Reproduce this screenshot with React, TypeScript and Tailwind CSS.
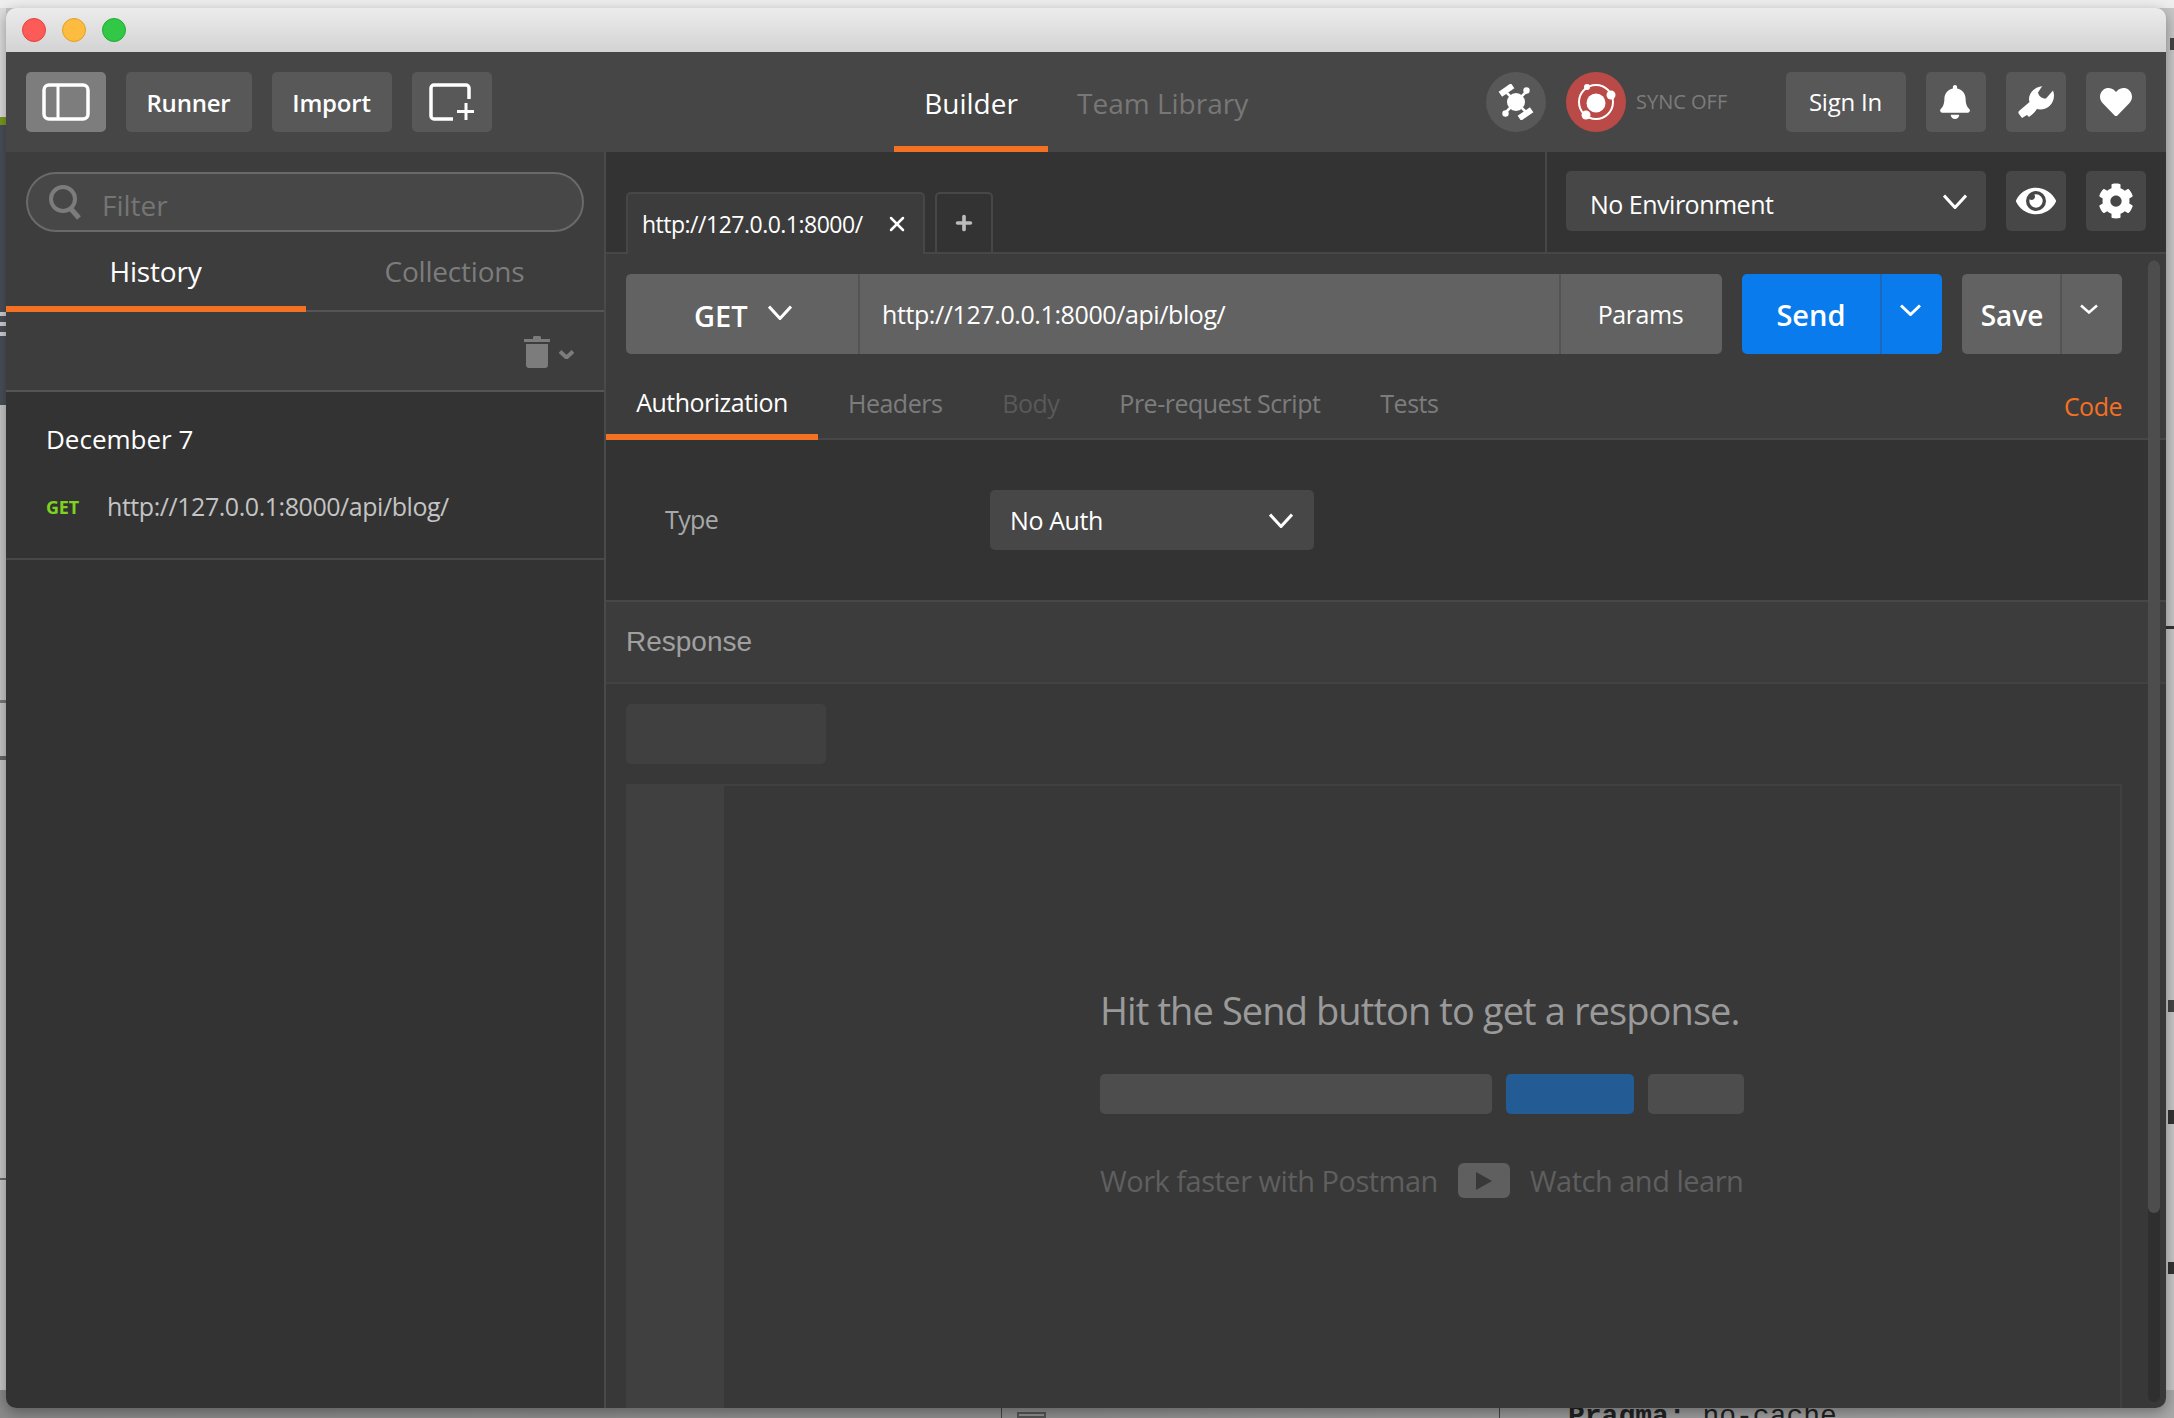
import { Plus, X } from "lucide-react";
import { FaBell, FaCog, FaEye, FaHeart } from "react-icons/fa";

function ToolbarButton({ children, className }: { children: React.ReactNode; className: string }) {
  return (
    <div className={"h-[60px] rounded-[5px] flex items-center justify-center text-white " + className}>
      {children}
    </div>
  );
}

function Chevron({ w, h, sw = 3, className }: { w: number; h: number; sw?: number; className?: string }) {
  return (
    <svg width={w} height={h} viewBox={`0 0 ${w} ${h}`} fill="none" stroke="currentColor" strokeWidth={sw} className={className}>
      <path d={`M1 1.5L${w / 2} ${h - 1.5}L${w - 1} 1.5`} />
    </svg>
  );
}

function SatelliteIcon() {
  return (
    <svg width="36" height="36" viewBox="0 0 36 36" fill="white">
      <circle cx="18" cy="18" r="9" />
      <g stroke="white" strokeWidth="2.5">
        <line x1="18" y1="18" x2="8" y2="8" />
        <line x1="18" y1="18" x2="28" y2="28" />
        <line x1="18" y1="18" x2="28" y2="8" />
        <line x1="18" y1="18" x2="8" y2="28" />
      </g>
      <circle cx="28.5" cy="6.5" r="3.2" />
      <circle cx="7.5" cy="29.5" r="3.2" />
      <rect x="1" y="3" width="15" height="6" transform="rotate(-35 8.5 6)" />
      <rect x="20" y="27" width="15" height="6" transform="rotate(-35 27.5 30)" />
    </svg>
  );
}

function SyncIcon() {
  return (
    <svg width="44" height="44" viewBox="0 0 44 44" fill="white">
      <circle cx="22" cy="23" r="9.5" />
      <circle cx="22" cy="22" r="17" fill="none" stroke="white" strokeWidth="2" />
      <circle cx="37" cy="15" r="4.5" />
      <circle cx="12" cy="35" r="4.5" />
      <circle cx="13" cy="7" r="3" />
    </svg>
  );
}

function WrenchIcon() {
  return (
    <svg width="36" height="32" viewBox="0 0 36 32" fill="white">
      <path d="M25 0C16 1 11 7 11 13c0 1 .2 2 .5 3L1 25c-.8 1-.8 2 0 3l3 4 5-3 2 2c3-2 6-5 8-8 1 .2 2 .4 3 .4 8 0 14-6 14-14 0-1.500-.3-3-1-5l-7 8c-4 0-7-2-8-6l6-9z" />
    </svg>
  );
}

function TrashIcon() {
  return (
    <svg width="26" height="32" viewBox="0 0 26 32" fill="currentColor">
      <path d="M0 3h9V1.5C9 .7 9.7 0 10.5 0h5c.8 0 1.5.7 1.5 1.5V3h9v3H0z" />
      <path d="M2 8h22v21c0 1.7-1.3 3-3 3H5c-1.700 0-3-1.300-3-3z" />
    </svg>
  );
}

export default function App() {
  return (
    <div className="relative w-[2174px] h-[1418px] overflow-hidden bg-[#c6c6c6] font-['Open_Sans',sans-serif]">
      {/* what shows behind the window */}
      <div className="absolute left-0 top-0 w-full h-[8px] bg-[#eeeeee]" />
      <div className="absolute left-0 top-[8px] w-[6px] h-[109px] bg-[#dddddd]" />
      <div className="absolute left-0 top-[117px] w-[6px] h-[8px] bg-[#7a9a20]" />
      <div className="absolute left-0 top-[125px] w-[6px] h-[280px] bg-[#4a4f58]" />
      <div className="absolute left-0 top-[312px] w-[6px] h-[4px] bg-[#d0d0d0]" />
      <div className="absolute left-0 top-[322px] w-[6px] h-[4px] bg-[#d0d0d0]" />
      <div className="absolute left-0 top-[332px] w-[6px] h-[4px] bg-[#d0d0d0]" />
      <div className="absolute left-0 top-[700px] w-[6px] h-[3px] bg-[#777777]" />
      <div className="absolute left-0 top-[756px] w-[6px] h-[4px] bg-[#666666]" />
      <div className="absolute left-0 top-[1178px] w-[6px] h-[2px] bg-[#666666]" />
      <div className="absolute right-0 top-[38px] w-[8px] h-[12px] border-r-4 border-[#444444]" />
      <div className="absolute right-0 top-[626px] w-[8px] h-[3px] bg-[#333333]" />
      <div className="absolute right-0 top-[1000px] w-[6px] h-[12px] bg-[#444444]" />
      <div className="absolute right-0 top-[1110px] w-[6px] h-[14px] bg-[#333333]" />
      <div className="absolute right-0 top-[1262px] w-[6px] h-[12px] bg-[#333333]" />
      <div className="absolute left-0 bottom-0 w-full h-[28px] bg-gradient-to-r from-[#8a8a8a] via-[#909090] to-[#a8a8a8]" />
      <div className="absolute left-[1001px] bottom-0 w-[1px] h-[14px] bg-[#444444]" />
      <div className="absolute left-[1017px] bottom-0 w-[29px] h-[6px] border-2 border-[#555555]" />
      <div className="absolute left-[1499px] bottom-0 w-[1px] h-[14px] bg-[#444444]" />
      <div className="absolute left-[1568px] top-[1401px] font-['Liberation_Mono',monospace] font-bold text-[28px] leading-[32px] text-[#222222] whitespace-pre">
        Pragma: <span className="font-normal">no-cache</span>
      </div>

      <div className="absolute left-[6px] top-[8px] w-[2160px] h-[1400px] rounded-[10px] overflow-hidden flex flex-col shadow-[0_4px_14px_rgba(0,0,0,0.35)]">
        {/* title bar */}
        <div className="h-[44px] shrink-0 bg-gradient-to-b from-[#ececec] to-[#d3d3d3] flex items-center pl-[16px] gap-[16px]">
          <div className="w-[24px] h-[24px] rounded-full bg-[#fc5b57] border border-[#e0443e]" />
          <div className="w-[24px] h-[24px] rounded-full bg-[#fdbc40] border border-[#dea123]" />
          <div className="w-[24px] h-[24px] rounded-full bg-[#33c748] border border-[#1dad2b]" />
        </div>

        {/* toolbar */}
        <div className="h-[100px] shrink-0 bg-[#464646] flex items-center px-[20px]">
          <ToolbarButton className="w-[80px] bg-[#7d7d7d]">
            <svg width="48" height="38" viewBox="0 0 48 38" fill="none" stroke="white" strokeWidth="3.5">
              <rect x="2" y="2" width="44" height="34" rx="5" />
              <line x1="16" y1="2" x2="16" y2="36" strokeWidth="3" />
            </svg>
          </ToolbarButton>
          <ToolbarButton className="w-[126px] ml-[20px] bg-[#585858] font-semibold text-[24px] tracking-[-0.2px] pt-[2px] pr-[1px]">Runner</ToolbarButton>
          <ToolbarButton className="w-[120px] ml-[20px] bg-[#585858] font-semibold text-[24px] tracking-[-0.2px] pt-[2px] pr-[1px]">Import</ToolbarButton>
          <ToolbarButton className="w-[80px] ml-[20px] bg-[#585858]">
            <svg width="46" height="38" viewBox="0 0 46 38" fill="none" stroke="white" strokeWidth="3.5">
              <path d="M24 36H5a3 3 0 0 1-3-3V5a3 3 0 0 1 3-3h32a3 3 0 0 1 3 3v11" />
              <path d="M37 20v17M28 28.500h17" strokeWidth="3" />
            </svg>
          </ToolbarButton>

          <div className="ml-[402px] w-[154px] h-full flex items-center justify-center text-white text-[28px] border-b-[6px] border-[#f47023] pt-[8px]">
            Builder
          </div>
          <div className="ml-[29px] h-full flex items-center text-[#777777] text-[28px] pt-[2px]">Team Library</div>

          <div className="ml-auto flex items-center">
            <div className="w-[60px] h-[60px] rounded-full bg-[#585858] flex items-center justify-center">
              <SatelliteIcon />
            </div>
            <div className="w-[60px] h-[60px] rounded-full bg-[#b94a48] ml-[20px] flex items-center justify-center">
              <SyncIcon />
            </div>
            <div className="w-[160px] pl-[10px] text-[#7c7c7c] text-[20px]">SYNC OFF</div>
            <ToolbarButton className="w-[120px] bg-[#585858] text-[24px] tracking-[-0.2px] pr-[1px]">Sign In</ToolbarButton>
            <ToolbarButton className="w-[60px] ml-[20px] bg-[#585858]">
              <FaBell size={34} className="-ml-[3px]" />
            </ToolbarButton>
            <ToolbarButton className="w-[60px] ml-[20px] bg-[#585858]">
              <WrenchIcon />
            </ToolbarButton>
            <ToolbarButton className="w-[60px] ml-[20px] bg-[#585858]">
              <FaHeart size={32} />
            </ToolbarButton>
          </div>
        </div>

        <div className="flex-1 flex min-h-0">
          {/* sidebar */}
          <div className="w-[600px] shrink-0 border-r-2 border-[#4a4a4a] bg-[#333333] flex flex-col">
            <div className="bg-[#3d3d3d] h-[160px] shrink-0 flex flex-col">
              <div className="mx-[20px] mt-[20px] w-[558px] h-[60px] shrink-0 rounded-full border-2 border-[#6a6a6a] bg-[#474747] flex items-center pl-[20px]">
                <svg width="34" height="36" viewBox="0 0 34 36" fill="none" stroke="#7c7c7c" strokeWidth="4">
                  <circle cx="15" cy="15" r="12" />
                  <path d="M23 25l8 9" strokeWidth="5" />
                </svg>
                <span className="ml-[20px] text-[#757575] text-[28px] pt-[6px]">Filter</span>
              </div>
              <div className="flex flex-1 border-b-2 border-[#555555]">
                <div className="w-[300px] -mb-[2px] flex items-center justify-center text-white text-[28px] border-b-[6px] border-[#f47023] tracking-[-0.2px] pt-[4px] pr-[1px]">
                  History
                </div>
                <div className="flex-1 flex items-center justify-center text-[#7c7c7c] text-[28px] tracking-[-0.2px] pr-[1px]">Collections</div>
              </div>
            </div>
            <div className="h-[80px] shrink-0 bg-[#3d3d3d] border-b-2 border-[#555555] flex items-center justify-end pr-[30px] pt-[2px] text-[#7c7c7c]">
              <TrashIcon />
              <Chevron w={15} h={9} sw={4} className="ml-[9px] mt-[4px]" />
            </div>
            <div className="h-[168px] shrink-0 border-b-2 border-[#484848] pl-[40px] pt-[29px]">
              <div className="text-white text-[26px] leading-[36px]">December 7</div>
              <div className="flex items-center mt-[31px]">
                <span className="w-[61px] text-[#7ed321] text-[18px] font-bold pt-[2px] tracking-[-0.2px]">GET</span>
                <span className="text-[#c4c4c4] text-[25px] leading-[36px] tracking-[-0.45px]">http://127.0.0.1:8000/api/blog/</span>
              </div>
            </div>
          </div>

          {/* main column */}
          <div className="relative flex-1 min-w-0 flex flex-col bg-[#383838]">
            <div className="h-[102px] shrink-0 bg-[#333333] border-b-2 border-[#474747] flex">
              <div className="flex-1 flex items-end pl-[20px] gap-[10px]">
                <div className="w-[299px] h-[62px] -mb-[2px] rounded-t-[5px] border-2 border-b-0 border-[#474747] bg-[#3c3c3c] flex items-center pl-[14px] text-white text-[23px] tracking-[-0.5px]">
                  http://127.0.0.1:8000/
                  <X size={24} strokeWidth={2.5} className="ml-[22px]" />
                </div>
                <div className="w-[58px] h-[60px] rounded-t-[5px] border-2 border-b-0 border-[#474747] flex items-center justify-center text-[#bbbbbb]">
                  <Plus size={22} strokeWidth={4} />
                </div>
              </div>
              <div className="w-[621px] shrink-0 border-l-2 border-[#474747] flex items-center pl-[19px] pr-[20px] pb-[2px] gap-[20px]">
                <div className="w-[420px] h-[60px] rounded-[5px] bg-[#474747] flex items-center pl-[24px] pr-[19px] text-white text-[25px] tracking-[-0.5px]">
                  <span className="pt-[7px]">No Environment</span>
                  <Chevron w={24} h={15} className="ml-auto" />
                </div>
                <ToolbarButton className="w-[60px] bg-[#474747]">
                  <FaEye size={40} />
                </ToolbarButton>
                <ToolbarButton className="w-[60px] bg-[#474747]">
                  <FaCog size={36} />
                </ToolbarButton>
              </div>
            </div>

            <div className="bg-[#3c3c3c] h-[186px] shrink-0 flex flex-col">
              <div className="flex pl-[20px] pt-[20px] gap-[20px]">
                <div className="w-[1096px] h-[80px] rounded-[5px] bg-[#626262] flex text-white">
                  <div className="w-[234px] border-r-2 border-[#545454] flex items-center pl-[68px] text-[29px] font-semibold">
                    <span className="pt-[3px]">GET</span>
                    <Chevron w={24} h={15} className="ml-[20px] -mt-[3px]" />
                  </div>
                  <div className="flex-1 flex items-center pl-[22px] pt-[2px] text-[25px] tracking-[-0.4px]">http://127.0.0.1:8000/api/blog/</div>
                  <div className="w-[163px] border-l-2 border-[#545454] flex items-center justify-center pt-[2px] pr-[2px] text-[25px] tracking-[-0.4px]">Params</div>
                </div>
                <div className="w-[200px] h-[80px] rounded-[5px] bg-[#097bed] flex text-white">
                  <div className="w-[138px] flex items-center justify-center font-semibold text-[29px] pt-[2px]">Send</div>
                  <div className="flex-1 border-l-2 border-[#1d69b8] flex items-center justify-center pr-[4px]">
                    <Chevron w={21} h={12} className="-mt-[8px]" />
                  </div>
                </div>
                <div className="w-[160px] h-[80px] rounded-[5px] bg-[#626262] flex text-white">
                  <div className="w-[98px] flex items-center justify-center font-semibold text-[28px] pt-[2px] pl-[2px]">Save</div>
                  <div className="flex-1 border-l-2 border-[#545454] flex items-center justify-center pr-[6px]">
                    <Chevron w={18} h={10} sw={2.5} className="-mt-[10px]" />
                  </div>
                </div>
              </div>
              <div className="mt-auto h-[66px] flex border-b-2 border-[#474747] text-[25px] tracking-[-0.5px]">
                <div className="w-[212px] -mb-[2px] border-b-[6px] border-[#f47023] flex items-center justify-center text-white pb-[2px]">
                  Authorization
                </div>
                <div className="px-[30px] flex items-center text-[#7c7c7c] pb-[4px]">Headers</div>
                <div className="px-[30px] flex items-center text-[#595959] pb-[4px]">Body</div>
                <div className="px-[30px] flex items-center text-[#7c7c7c] pb-[4px]">Pre-request Script</div>
                <div className="px-[30px] flex items-center text-[#7c7c7c] pb-[4px]">Tests</div>
                <div className="ml-auto mr-[44px] flex items-center text-[#f47023] pt-[2px]">Code</div>
              </div>
            </div>

            <div className="h-[162px] shrink-0 bg-[#333333] border-b-2 border-[#474747] flex items-start pl-[59px] pt-[50px]">
              <div className="w-[325px] h-[60px] flex items-center text-[#a8a8a8] text-[25px] tracking-[-0.6px]">Type</div>
              <div className="w-[324px] h-[60px] rounded-[5px] bg-[#474747] flex items-center pl-[20px] pr-[21px] text-white text-[25px] tracking-[-0.4px]">
                <span className="pt-[2px]">No Auth</span>
                <Chevron w={24} h={15} className="ml-auto" />
              </div>
            </div>

            <div className="h-[82px] shrink-0 bg-[#3c3c3c] border-b-2 border-[#424242] flex items-center pl-[20px] font-['Liberation_Sans',sans-serif] text-[#a0a0a0] text-[28px]">
              Response
            </div>

            <div className="w-[200px] h-[60px] shrink-0 ml-[20px] mt-[20px] rounded-[5px] bg-[#404040]" />

            <div className="flex-1 min-h-0 flex ml-[20px] mt-[20px] w-[1496px] border-t-2 border-r-2 border-[#404040]">
              <div className="w-[98px] bg-[#404040]" />
              <div className="flex-1 pl-[376px] pt-[204px]">
                <div className="text-[#9a9a9a] text-[38px] leading-[40px] whitespace-nowrap tracking-[-0.9px]">Hit the Send button to get a response.</div>
                <div className="flex gap-[14px] mt-[44px]">
                  <div className="w-[392px] h-[40px] rounded-[5px] bg-[#4d4d4d]" />
                  <div className="w-[128px] h-[40px] rounded-[5px] bg-[#235b94]" />
                  <div className="w-[96px] h-[40px] rounded-[5px] bg-[#4d4d4d]" />
                </div>
                <div className="flex items-center mt-[45px] text-[#5f5f5f] text-[29px] whitespace-nowrap tracking-[-0.5px]">
                  Work faster with Postman
                  <div className="w-[52px] h-[35px] ml-[20px] mr-[20px] rounded-[6px] bg-[#5f5f5f] flex items-center justify-center">
                    <svg width="18" height="20" viewBox="0 0 18 20" fill="#383838">
                      <path d="M1 1l16 9-16 9z" />
                    </svg>
                  </div>
                  Watch and learn
                </div>
              </div>
            </div>

            {/* scrollbar */}
            <div className="absolute left-[1542px] top-[108px] bottom-[6px] w-[12px] rounded-full bg-[#2f2f2f] overflow-hidden">
              <div className="h-[953px] rounded-full bg-[#4d4d4d]" />
            </div>
          </div>
        </div>
      </div>
    </div>
  );
}
